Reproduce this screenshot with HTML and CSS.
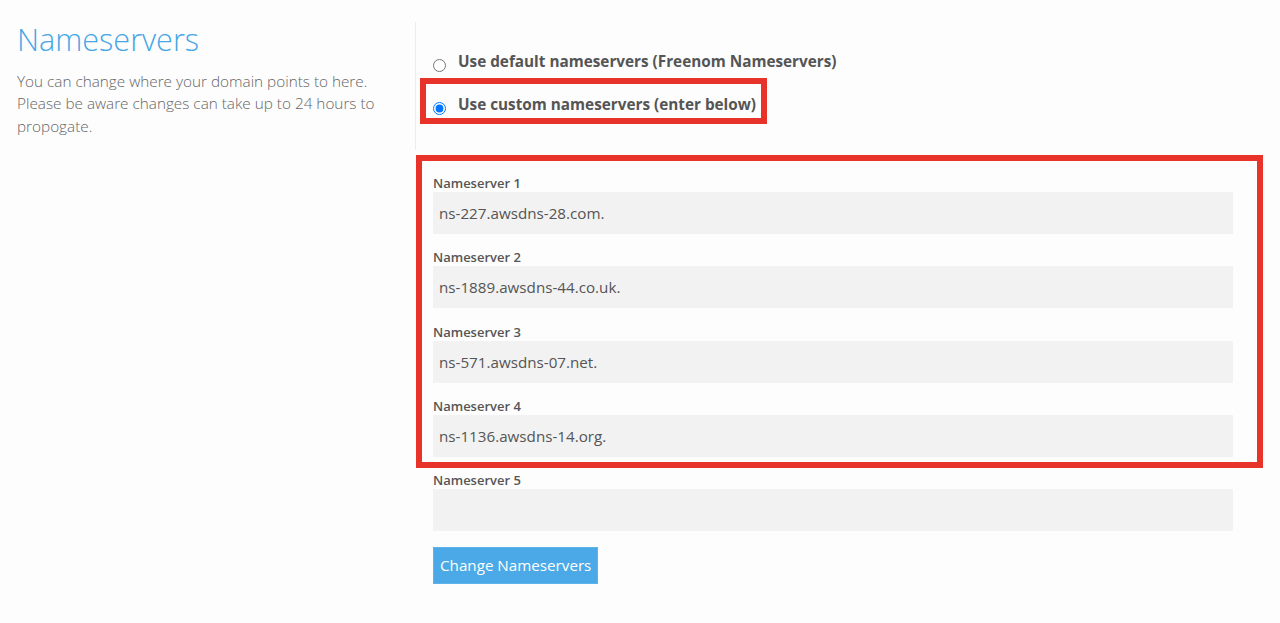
FILE: index.html
```
<!DOCTYPE html>
<html lang="en">
<head>
<meta charset="utf-8">
<title>Nameservers</title>
<link rel="stylesheet" href="styles.css">
</head>
<body>
<div class="page">
  <section class="intro">
    <h1 class="intro-title">Nameservers</h1>
    <p class="intro-text">You can change where your domain points to here. Please be aware changes can take up to 24 hours to propogate.</p>
  </section>
  <section class="form">
    <div class="choices">
      <label class="choice"><input class="choice-radio" type="radio" name="nstype"><span class="choice-label">Use default nameservers (Freenom Nameservers)</span></label>
      <label class="choice"><input class="choice-radio" type="radio" name="nstype" checked><span class="choice-label">Use custom nameservers (enter below)</span></label>
    </div>
    <div class="fields">
      <div class="field"><label class="field-label" for="ns1">Nameserver 1</label><input class="field-input" id="ns1" type="text" value="ns-227.awsdns-28.com."></div>
      <div class="field"><label class="field-label" for="ns2">Nameserver 2</label><input class="field-input" id="ns2" type="text" value="ns-1889.awsdns-44.co.uk."></div>
      <div class="field"><label class="field-label" for="ns3">Nameserver 3</label><input class="field-input" id="ns3" type="text" value="ns-571.awsdns-07.net."></div>
      <div class="field"><label class="field-label" for="ns4">Nameserver 4</label><input class="field-input" id="ns4" type="text" value="ns-1136.awsdns-14.org."></div>
      <div class="field"><label class="field-label" for="ns5">Nameserver 5</label><input class="field-input" id="ns5" type="text" value=""></div>
    </div>
    <button class="submit" type="button">Change Nameservers</button>
    <div class="mark mark-choice"></div>
    <div class="mark mark-fields"></div>
  </section>
</div>
</body>
</html>
```
FILE: styles.css
```
* { box-sizing: border-box; }
html, body { margin: 0; padding: 0; }
body {
  background: #fdfdfd;
  font-family: "Open Sans", "Liberation Sans", sans-serif;
  color: #555;
  width: 1280px;
  height: 623px;
  overflow: hidden;
}
.page {
  display: flex;
  align-items: flex-start;
}
.intro {
  width: 415px;
  padding: 0 30px 0 17px;
}
.intro-title {
  margin: 17px 0 0;
  font-size: 30.6px;
  line-height: 44px;
  font-weight: 300;
  color: #46a6e6;
}
.intro-text {
  margin: 9px 0 0;
  font-size: 15.3px;
  line-height: 22.4px;
  font-weight: 300;
  color: #666;
}
.form {
  position: relative;
  width: 848px;
}
.choices {
  margin-top: 22px;
  height: 128px;
  border-left: 1px solid #ececec;
  padding: 28px 0 0 17px;
  display: flex;
  flex-direction: column;
  gap: 21.3px;
}
.choice {
  display: flex;
  align-items: flex-start;
  font-size: 15.3px;
  line-height: 22px;
  font-weight: 700;
  color: #555;
}
.choice-radio {
  width: 13px;
  height: 13px;
  margin: 9px 12px 0 0;
  flex: none;
}
.fields {
  margin-top: 21px;
  padding-left: 18px;
}
.field {
  margin-bottom: 11.3px;
}
.field-label {
  display: block;
  font-size: 13px;
  line-height: 18px;
  padding-top: 3px;
  font-weight: 600;
  color: #555;
  margin-bottom: 0;
}
.field-input {
  display: block;
  width: 800px;
  height: 42px;
  border: none;
  background: #f2f2f2;
  padding: 0 6px;
  font-family: "Open Sans", "Liberation Sans", sans-serif;
  font-size: 15.2px;
  color: #555;
  outline: none;
}
.submit {
  margin: 5px 0 0 18px;
  height: 37px;
  padding: 0 6px;
  border: 1px solid #5cb3ea;
  background: #4aa9e6;
  color: #fff;
  font-family: "Open Sans", "Liberation Sans", sans-serif;
  font-size: 15.2px;
  line-height: 21px;
}
.mark {
  position: absolute;
  border: 6px solid #e8332a;
  pointer-events: none;
}
.mark-choice {
  left: 5px;
  top: 78px;
  width: 347px;
  height: 46px;
}
.mark-fields {
  left: 1px;
  top: 155px;
  width: 847px;
  height: 313px;
}
```
